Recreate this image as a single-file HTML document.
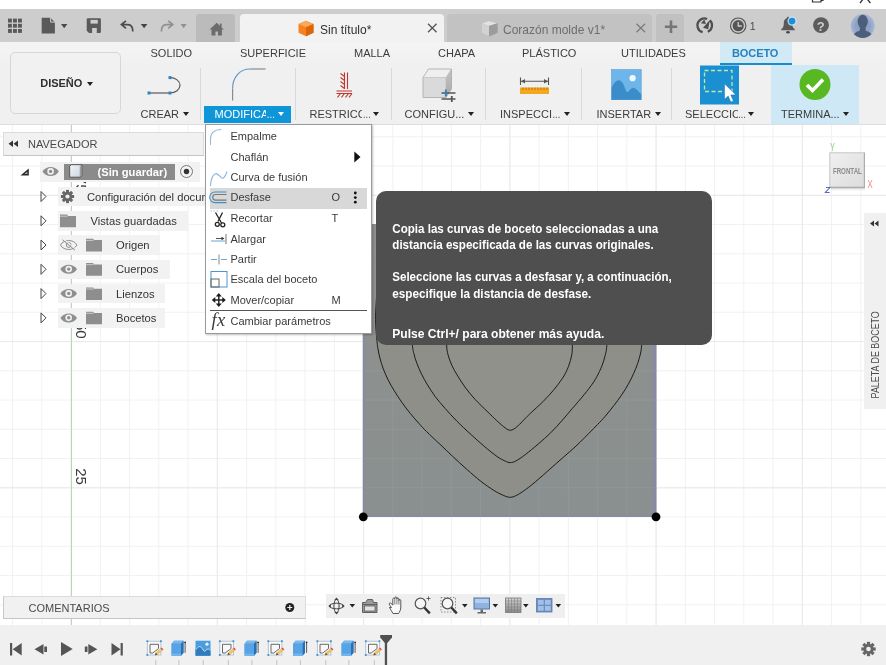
<!DOCTYPE html>
<html>
<head>
<meta charset="utf-8">
<title>Fusion 360</title>
<style>
html,body{margin:0;padding:0;}
body{width:886px;height:665px;overflow:hidden;background:#fff;position:relative;font-family:"Liberation Sans",sans-serif;font-size:11px;color:#3c3c3c;}
.abs{position:absolute;}
.t{position:absolute;white-space:nowrap;line-height:14px;}
#canvas{position:absolute;left:0;top:124px;width:886px;height:501px;background:#fff;overflow:hidden;}
#titlebar{position:absolute;left:0;top:9.300px;width:886px;height:32.700px;background:#cdcdcd;}
#ribbon{position:absolute;left:0;top:41.700px;width:886px;height:83.300px;background:linear-gradient(#f4f4f4,#f0f0f0 30%,#f0f0f0);border-bottom:1px solid #dedede;box-sizing:border-box;}
.sep{position:absolute;top:68px;width:1px;height:52px;background:#d9d9d9;}
.rt{position:absolute;top:46px;line-height:14px;white-space:nowrap;color:#3c3c3c;}
.rl{position:absolute;top:107px;line-height:14px;white-space:nowrap;color:#3c3c3c;}
.dd{position:absolute;width:0;height:0;border-left:3px solid transparent;border-right:3px solid transparent;border-top:4px solid #222;}
</style>
</head>
<body>
<div id="root" style="position:absolute;left:0;top:0;width:886px;height:665px;overflow:hidden;will-change:transform;">

<!-- ============ CANVAS ============ -->
<div id="canvas">
<svg class="abs" style="left:0;top:0" width="886" height="501" viewBox="0 124 886 501">
  <defs>
    <pattern id="gmin" x="70.6" y="487.3" width="29.25" height="29.25" patternUnits="userSpaceOnUse">
      <path d="M0.5 0V29.25M0 0.5H29.25" stroke="#f1f1f1" stroke-width="1" fill="none"/>
    </pattern>
    <pattern id="gmaj" x="70.6" y="487.3" width="146.25" height="146.25" patternUnits="userSpaceOnUse">
      <path d="M0.5 0V146.25M0 0.5H146.25" stroke="#e9e9e9" stroke-width="1" fill="none"/>
    </pattern>
  </defs>
  <rect x="0" y="124" width="886" height="501" fill="url(#gmin)"/>
  <rect x="0" y="124" width="886" height="501" fill="url(#gmaj)"/>
  <!-- green axis -->
  <line x1="71.500" y1="124" x2="71.500" y2="625" stroke="#b6d9ba" stroke-width="1"/>
  <!-- sketch rectangle -->
  <defs>
    <linearGradient id="rg" x1="0" y1="0" x2="0" y2="1">
      <stop offset="0" stop-color="#8f908d"/><stop offset="1" stop-color="#8a9090"/>
    </linearGradient>
  </defs>
  <rect x="363" y="224" width="293.300" height="292.900" fill="url(#rg)"/>
  <defs>
    <linearGradient id="eR" x1="0" y1="0" x2="1" y2="0"><stop offset="0" stop-color="#8686ac" stop-opacity="0"/><stop offset="0.550" stop-color="#8686ac" stop-opacity="0.300"/><stop offset="1" stop-color="#8686ac" stop-opacity="0.950"/></linearGradient>
    <linearGradient id="eL" x1="1" y1="0" x2="0" y2="0"><stop offset="0" stop-color="#8686ac" stop-opacity="0"/><stop offset="1" stop-color="#8686ac" stop-opacity="0.950"/></linearGradient>
    <linearGradient id="eB" x1="0" y1="0" x2="0" y2="1"><stop offset="0" stop-color="#8686ac" stop-opacity="0"/><stop offset="1" stop-color="#8686ac" stop-opacity="0.950"/></linearGradient>
  </defs>
  <rect x="649.300" y="224" width="7" height="292.900" fill="url(#eR)"/>
  <rect x="362.700" y="224" width="3.300" height="292.900" fill="url(#eL)"/>
  <rect x="363" y="513.600" width="293.300" height="3.300" fill="url(#eB)"/>
  <!-- faint grid showing through -->
  <g stroke="#ffffff" stroke-opacity="0.060" stroke-width="1">
    <path d="M392.800 224v293M422.100 224v293M451.300 224v293M480.600 224v293M509.800 224v293M539.100 224v293M568.300 224v293M597.600 224v293M626.800 224v293"/>
    <path d="M363 370.800h293M363 400h293M363 429.300h293M363 458.500h293M363 487.800h293"/>
  </g>
  <!-- hearts -->
  <path id="h1" d="M510.5 272.0C503.0 272.0 497.2 256.0 488.0 250.0C478.8 244.0 466.3 238.0 455.0 236.0C443.7 234.0 430.3 234.7 420.0 238.0C409.7 241.3 399.8 248.3 393.0 256.0C386.2 263.7 381.9 275.0 379.0 284.0C376.1 293.0 376.3 302.7 375.8 310.0C375.3 317.3 375.7 322.9 375.9 328.0C376.1 333.1 376.6 337.0 376.9 340.4C377.2 343.8 377.4 345.6 377.9 348.5C378.4 351.4 379.0 354.6 379.9 358.0C380.8 361.4 381.9 365.3 383.3 368.9C384.7 372.5 386.2 376.1 388.0 379.7C389.8 383.3 391.8 386.8 394.1 390.5C396.4 394.2 398.9 398.1 401.6 402.0C404.3 405.9 407.5 410.0 410.4 413.6C413.3 417.2 416.5 420.7 419.2 423.7C421.9 426.7 423.0 428.1 426.5 431.5C430.0 434.9 435.6 440.2 440.0 444.3C444.4 448.4 448.1 452.1 452.6 456.3C457.1 460.5 462.1 465.2 466.9 469.4C471.6 473.6 476.6 478.0 481.1 481.5C485.6 485.0 490.0 488.0 493.7 490.3C497.4 492.6 500.4 494.1 503.2 495.3C506.0 496.5 507.9 497.4 510.3 497.3C512.7 497.2 514.4 496.5 517.4 494.9C520.4 493.2 524.3 490.6 528.5 487.4C532.7 484.2 538.0 479.6 542.7 475.5C547.4 471.4 552.4 466.8 556.9 462.9C561.4 458.9 565.8 455.2 569.6 451.8C573.5 448.4 576.8 445.4 580.0 442.3C583.2 439.2 586.0 436.2 589.0 433.2C592.0 430.2 595.0 427.2 597.7 424.4C600.4 421.6 602.5 419.5 605.2 416.3C607.9 413.1 611.3 408.9 614.0 405.4C616.7 401.9 619.0 398.8 621.4 395.3C623.8 391.8 626.2 388.0 628.2 384.4C630.2 380.8 632.0 377.1 633.6 373.6C635.2 370.1 636.6 366.7 637.7 363.4C638.8 360.1 639.7 357.0 640.4 354.0C641.1 351.0 641.2 349.5 641.7 345.2C642.2 340.9 643.1 333.9 643.5 328.0C643.9 322.1 644.4 317.3 644.0 310.0C643.6 302.7 643.7 293.0 641.0 284.0C638.3 275.0 634.7 263.7 628.0 256.0C621.3 248.3 611.3 241.3 601.0 238.0C590.7 234.7 577.3 234.0 566.0 236.0C554.7 238.0 542.2 244.0 533.0 250.0C523.8 256.0 518.0 272.0 510.5 272.0z" fill="#8f8f89" stroke="#1c1c1c" stroke-width="1"/>
  <path id="h2" d="M510.5 296.0C503.7 296.0 498.1 281.0 490.0 276.0C481.9 271.0 471.3 266.7 462.0 266.0C452.7 265.3 441.7 267.7 434.0 272.0C426.3 276.3 419.9 284.3 416.0 292.0C412.1 299.7 411.1 309.2 410.5 318.0C409.9 326.8 411.8 338.9 412.4 344.9C413.0 350.8 413.1 350.6 413.9 353.7C414.6 356.8 415.6 360.0 416.9 363.4C418.2 366.8 419.8 370.6 421.6 374.2C423.4 377.8 425.2 381.1 427.5 384.9C429.8 388.6 432.4 392.8 435.3 396.7C438.2 400.6 441.5 404.3 445.1 408.4C448.7 412.5 452.7 416.9 456.8 421.1C460.9 425.3 465.4 429.4 470.0 433.6C474.6 437.8 479.7 442.5 484.2 446.3C488.7 450.1 493.5 454.0 496.9 456.4C500.3 458.8 502.6 459.9 504.8 460.9C507.0 461.9 508.5 462.6 510.3 462.6C512.1 462.6 513.3 462.3 515.8 461.0C518.3 459.7 521.6 457.4 525.3 454.6C529.0 451.8 533.8 447.8 538.0 444.2C542.2 440.6 546.5 436.9 550.6 432.9C554.7 428.9 558.9 424.1 562.5 420.0C566.1 415.9 568.8 412.6 572.4 408.4C576.0 404.2 580.7 398.9 584.1 394.7C587.5 390.5 590.9 386.1 593.0 383.0C595.1 379.9 595.5 379.1 597.0 376.3C598.5 373.5 600.4 369.7 601.8 366.2C603.2 362.7 604.4 358.8 605.2 355.3C606.1 351.8 606.2 351.4 606.9 345.2C607.6 339.0 609.8 326.9 609.5 318.0C609.2 309.1 608.8 299.7 605.0 292.0C601.2 284.3 594.7 276.3 587.0 272.0C579.3 267.7 568.3 265.3 559.0 266.0C549.7 266.7 539.1 271.0 531.0 276.0C522.9 281.0 517.3 296.0 510.5 296.0z" fill="#8f8f89" stroke="#1c1c1c" stroke-width="1"/>
  <path id="h3" d="M510.5 318.0C505.0 318.0 500.1 305.3 494.0 302.0C487.9 298.7 480.5 297.0 474.0 298.0C467.5 299.0 459.6 303.3 455.0 308.0C450.4 312.7 447.9 319.9 446.5 326.0C445.1 332.1 446.4 340.1 446.6 344.9C446.9 349.7 447.1 351.3 448.0 354.7C448.9 358.1 450.3 361.8 451.9 365.4C453.5 369.0 455.5 372.4 457.8 376.1C460.1 379.9 462.7 384.0 465.6 387.9C468.5 391.8 471.7 395.7 475.3 399.6C478.9 403.5 483.9 408.2 487.1 411.3C490.3 414.4 491.8 416.0 494.5 418.5C497.2 421.0 500.6 424.3 503.2 426.3C505.8 428.3 507.9 430.3 510.3 430.3C512.7 430.3 514.8 428.4 517.4 426.3C520.0 424.2 523.9 419.7 526.1 417.5C528.3 415.3 527.6 416.0 530.4 413.3C533.2 410.6 539.2 405.4 543.1 401.5C547.0 397.6 550.5 393.7 553.8 389.8C557.0 385.9 560.1 382.0 562.6 378.1C565.1 374.2 567.0 370.3 568.5 366.4C570.0 362.5 571.1 358.3 571.8 354.7C572.4 351.1 572.2 349.7 572.4 344.9C572.6 340.1 574.1 332.1 573.0 326.0C571.9 319.9 570.3 312.7 566.0 308.0C561.7 303.3 553.5 299.0 547.0 298.0C540.5 297.0 533.1 298.7 527.0 302.0C520.9 305.3 516.0 318.0 510.5 318.0z" fill="#90918a" stroke="#1c1c1c" stroke-width="1"/>
  <circle cx="363.300" cy="516.800" r="4.400" fill="#000"/>
  <circle cx="656" cy="516.800" r="4.400" fill="#000"/>
  <!-- axis labels (rotated) -->
  <g font-family="Liberation Sans, sans-serif" font-size="15" fill="#3a3a3a">
    <text transform="translate(75.500,175.800) rotate(90)">75</text>
    <text transform="translate(75.500,322) rotate(90)">50</text>
    <text transform="translate(75.500,468.200) rotate(90)">25</text>
  </g>
</svg>
</div>

<!-- ============ BROWSER ============ -->
<style>
.row{position:absolute;height:19.500px;background:#f2f2f2;}
.rtx{position:absolute;white-space:nowrap;line-height:14px;font-size:11.200px;color:#333;}
</style>
<div class="abs" style="left:2.500px;top:131.500px;width:201px;height:24px;box-sizing:border-box;background:#f1f1f1;border:1px solid #dcdcdc;border-bottom-color:#c4c4c4;"></div>
<div class="t" style="left:28px;top:137px;color:#4a4a4a;">NAVEGADOR</div>
<!-- rows -->
<div class="row" style="left:39.500px;top:162px;width:160.500px;"></div>
<div class="abs" style="left:64.200px;top:164.200px;width:111px;height:15.500px;background:#8b8b8b;"></div>
<div class="row" style="left:57.500px;top:186.800px;width:150px;"></div>
<div class="row" style="left:57.500px;top:211px;width:130px;"></div>
<div class="row" style="left:57.500px;top:235.200px;width:102.500px;"></div>
<div class="row" style="left:57.500px;top:259.500px;width:112px;"></div>
<div class="row" style="left:57.500px;top:283.800px;width:107.500px;"></div>
<div class="row" style="left:57.500px;top:308.100px;width:107.500px;"></div>
<div class="rtx" style="left:97.500px;top:165px;color:#fff;font-weight:bold;font-size:11.200px;">(Sin guardar)</div>
<div class="rtx" style="left:87px;top:189.500px;">Configuración del documento</div>
<div class="rtx" style="left:90.500px;top:213.800px;">Vistas guardadas</div>
<div class="rtx" style="left:116px;top:238px;">Origen</div>
<div class="rtx" style="left:116px;top:262.300px;">Cuerpos</div>
<div class="rtx" style="left:116px;top:286.600px;">Lienzos</div>
<div class="rtx" style="left:116px;top:310.900px;">Bocetos</div>
<svg class="abs" style="left:0;top:124px" width="210" height="220" viewBox="0 124 210 220">
  <!-- collapse arrows -->
  <path d="M13 140.500l-4.500 3.300l4.500 3.300zM18 140.500l-4.500 3.300l4.500 3.300z" fill="#333"/>
  <!-- root expand -->
  <path d="M28.800 168.500v7h-8.300z" fill="#2a2a2a"/><path d="M27.300 171.800v2.300h-2.800z" fill="#bbb"/>
  <!-- root eye -->
  <g fill="none">
    <path d="M42.500 171.600c3.600-6 12.700-6 16.300 0c-3.600 6-12.700 6-16.300 0z" fill="#8e8e8e"/>
    <circle cx="50.600" cy="171.400" r="3.300" fill="#f2f2f2"/>
    <circle cx="50.600" cy="171.400" r="1.700" fill="#8e8e8e"/>
  </g>
  <!-- root doc icon -->
  <defs><linearGradient id="dg" x1="0" y1="0" x2="1" y2="1"><stop offset="0" stop-color="#f4f7fa"/><stop offset="1" stop-color="#c9d3de"/></linearGradient></defs>
  <path d="M69.700 166.300l1.600-1.600h10.600v10.800l-1.600 1.700h-10.600z" fill="url(#dg)" stroke="#4f4f4f" stroke-width="0.900" stroke-linejoin="round"/>
  <path d="M80.300 166.300v10.900M80.300 166.300l1.600-1.600" fill="none" stroke="#6a6a6a" stroke-width="0.700"/>
  <!-- radio -->
  <circle cx="186.500" cy="171.500" r="6" fill="#f4f4f4" stroke="#777" stroke-width="1"/>
  <circle cx="186.500" cy="171.500" r="2.700" fill="#333"/>
  <!-- expand triangles -->
  <g fill="none" stroke="#444" stroke-width="1">
    <path d="M41 191.500v10l5-5z"/>
    <path d="M41 215.800v10l5-5z"/>
    <path d="M41 240v10l5-5z"/>
    <path d="M41 264.300v10l5-5z"/>
    <path d="M41 288.600v10l5-5z"/>
    <path d="M41 312.900v10l5-5z"/>
  </g>
  <!-- gear -->
  <g transform="translate(67.500,196.500)" fill="#666">
    <circle r="4.600"/>
    <g id="teeth"><rect x="-1.500" y="-6.600" width="3" height="13.200"/><rect x="-6.600" y="-1.500" width="13.200" height="3"/></g>
    <g transform="rotate(45)"><rect x="-1.500" y="-6.600" width="3" height="13.200"/><rect x="-6.600" y="-1.500" width="13.200" height="3"/></g>
    <circle r="2.100" fill="#efefef"/>
  </g>
  <!-- folders -->
  <g fill="#8e8e8e">
    <path d="M60 214.6h7l1.200 1.300h7.800v11.300h-16z"/>
    <path d="M86 238.8h7l1.200 1.300h7.800v11.300h-16z"/>
    <path d="M86 263.1h7l1.200 1.300h7.800v11.300h-16z"/>
    <path d="M86 287.4h7l1.200 1.300h7.800v11.300h-16z"/>
    <path d="M86 311.7h7l1.200 1.300h7.800v11.300h-16z"/>
  </g>
  <g stroke="#f2f2f2" stroke-width="0.600"><path d="M60 216.200h7.600M86 240.400h7.600M86 264.700h7.600M86 289h7.600M86 313.300h7.600"/></g>
  <!-- eyes -->
  <g>
    <path d="M60.400 245c3.600-6 13-6 16.600 0c-3.600 6-13 6-16.600 0z" fill="none" stroke="#8e8e8e" stroke-width="1"/>
    <circle cx="68.700" cy="245" r="2.400" fill="none" stroke="#8e8e8e" stroke-width="1"/>
    <path d="M62.500 239.800l12.500 10.400" stroke="#8e8e8e" stroke-width="1"/>
    <path d="M64 239.200l12.500 10.400" stroke="#f2f2f2" stroke-width="0.900"/>
  </g>
  <g>
    <path d="M60.400 269.3c3.600-6 13-6 16.600 0c-3.600 6-13 6-16.600 0z" fill="#8e8e8e"/>
    <circle cx="68.700" cy="269.1" r="3.300" fill="#f2f2f2"/><circle cx="68.700" cy="269.1" r="1.700" fill="#8e8e8e"/>
    <path d="M60.400 293.6c3.600-6 13-6 16.600 0c-3.600 6-13 6-16.600 0z" fill="#8e8e8e"/>
    <circle cx="68.700" cy="293.4" r="3.300" fill="#f2f2f2"/><circle cx="68.700" cy="293.4" r="1.700" fill="#8e8e8e"/>
    <path d="M60.400 317.9c3.600-6 13-6 16.600 0c-3.600 6-13 6-16.600 0z" fill="#8e8e8e"/>
    <circle cx="68.700" cy="317.7" r="3.300" fill="#f2f2f2"/><circle cx="68.700" cy="317.7" r="1.700" fill="#8e8e8e"/>
  </g>
</svg>

<!-- ============ TITLE BAR ============ -->
<div id="titlebar"></div>
<!-- window controls (cropped) -->
<svg class="abs" style="left:800px;top:0" width="86" height="9" viewBox="800 0 86 9">
  <path d="M812.500 -3v5h8.500v-5M821 0.500h2v-4" fill="none" stroke="#333" stroke-width="1.200"/>
  <path d="M865.200 -3.500l-5.200 6.500M865.200 -3.500l5.200 6.500" fill="none" stroke="#333" stroke-width="1.300"/>
</svg>
<!-- home button -->
<div class="abs" style="left:195.500px;top:13.500px;width:39px;height:28px;background:#bbbbbb;border-radius:3px 3px 0 0;"></div>
<!-- active tab -->
<div class="abs" style="left:239.500px;top:13.500px;width:204px;height:28.500px;background:#f2f2f2;border-radius:4px 4px 0 0;"></div>
<!-- second tab -->
<div class="abs" style="left:447px;top:13.500px;width:204.500px;height:28.500px;background:#c2c2c2;border-radius:4px 4px 0 0;"></div>
<!-- plus button -->
<div class="abs" style="left:656px;top:13.500px;width:28px;height:28px;background:#c1c1c1;border-radius:3px 3px 0 0;"></div>
<svg class="abs" style="left:0;top:9px" width="886" height="32" viewBox="0 9 886 32">
  <!-- app grid -->
  <g fill="#5a5a5a">
    <rect x="8" y="18.600" width="3.900" height="3.900"/><rect x="13" y="18.600" width="3.900" height="3.900"/><rect x="18" y="18.600" width="3.900" height="3.900"/>
    <rect x="8" y="23.800" width="3.900" height="3.900"/><rect x="13" y="23.800" width="3.900" height="3.900"/><rect x="18" y="23.800" width="3.900" height="3.900"/>
    <rect x="8" y="29" width="3.900" height="3.900"/><rect x="13" y="29" width="3.900" height="3.900"/><rect x="18" y="29" width="3.900" height="3.900"/>
  </g>
  <!-- file -->
  <path d="M41.700 17.800h8.700l4.500 4.500v11.200h-13.200z" fill="#5a5a5a"/>
  <path d="M50.600 17.800v4.300h4.300" fill="none" stroke="#cdcdcd" stroke-width="1"/>
  <path d="M61 24.100h6.400l-3.200 4.100z" fill="#4a4a4a"/>
  <!-- save -->
  <path d="M88 18.200h11.700q1.200 0 1.200 1.200v12.400q0 1.200-1.200 1.200h-10.700l-2.300-2.300v-11.300q0-1.200 1.300-1.200z" fill="#5a5a5a"/>
  <rect x="90.500" y="19.900" width="7.300" height="3.700" fill="#cdcdcd"/>
  <rect x="92.100" y="28" width="4.700" height="5.200" fill="#cdcdcd"/>
  <!-- undo -->
  <path d="M126 20.800l-4.600 3.800 4.600 3.800M122 24.600h6q4.800 0 4.800 6.900" fill="none" stroke="#4d4d4d" stroke-width="1.700" stroke-linejoin="miter"/>
  <path d="M140.800 24.100h6.600l-3.300 4.100z" fill="#444"/>
  <!-- redo -->
  <path d="M168.200 20.800l4.600 3.800-4.600 3.800M172.200 24.600h-6q-4.800 0-4.800 6.900" fill="none" stroke="#919191" stroke-width="1.700" stroke-linejoin="miter"/>
  <path d="M180.600 24.100h6l-3 4.100z" fill="#919191"/>
  <!-- home icon -->
  <path d="M216.700 22.800l-7.200 6.600h2v6.200h3.900v-4.200h2.600v4.200h3.900v-6.200h2z" fill="#6c6c6c"/>
  <rect x="219.900" y="23.600" width="1.700" height="3.400" fill="#6c6c6c"/>
  <!-- orange cube -->
  <g transform="translate(0,2.200)">
    <path d="M306 18.5l7.5 3.2v8.8l-7.5 3.5l-7.5-3.5v-8.8z" fill="#f58220"/>
    <path d="M306 18.5l7.5 3.2l-7.5 3.4l-7.5-3.4z" fill="#fba85a"/>
    <path d="M306 25.1v8.9l7.5-3.5v-8.8z" fill="#d9640a"/>
  </g>
  <!-- gray cube -->
  <g transform="translate(0,2.300)">
    <path d="M489 18.8l8.5 2.2v9.5l-8.5 3.8l-7-3.6v-9.6z" fill="#a9a9a9"/>
    <path d="M482 21.1l7 2.6v10.6l-7-3.6z" fill="#d2d2d2"/>
    <path d="M482 21.1l7-2.3l8.5 2.2l-8.5 2.7z" fill="#e2e2e2"/>
    <path d="M489 23.7v10.6l8.5-3.8v-9.5z" fill="#9c9c9c"/>
  </g>
  <!-- tab close X -->
  <path d="M428 23.700l8.600 8.600M436.600 23.700l-8.600 8.600" stroke="#555" stroke-width="1.3" fill="none"/>
  <path d="M636.500 23.700l8.600 8.600M645.100 23.700l-8.600 8.600" stroke="#7d7d7d" stroke-width="1.3" fill="none"/>
  <!-- plus -->
  <path d="M671 20.500v12.500M664.800 26.800h12.400" stroke="#767676" stroke-width="2.600" fill="none"/>
  <!-- job status -->
  <path d="M709.800 20.300a7 7 0 0 1-2 11.500M702.600 32.200a7 7 0 0 1-3-11.800a7 7 0 0 1 7.500-1.400" fill="none" stroke="#4f4f4f" stroke-width="2.300"/>
  <path d="M703 27.800l6.800-7.800l-1.600 9.200z" fill="#4f4f4f"/>
  <path d="M700.800 23.200l3.600-3.600l1.500 4.500z" fill="#4f4f4f"/>
  <!-- clock -->
  <circle cx="738.200" cy="25.700" r="7.700" fill="none" stroke="#555" stroke-width="1.100"/>
  <circle cx="738.200" cy="25.700" r="5.600" fill="#555"/>
  <path d="M738.200 22v4h3.600" fill="none" stroke="#cdcdcd" stroke-width="1.300"/>
  <!-- bell -->
  <rect x="787" y="16.700" width="2" height="2.500" rx="0.800" fill="#595959"/>
  <path d="M788 18c-3 0-4.200 2.600-4.200 5.400c0 3-0.900 4.600-2.500 5.700v1.200h13.400v-1.200c-1.600-1.100-2.500-2.700-2.500-5.700c0-2.800-1.200-5.400-4.200-5.400z" fill="#595959"/>
  <ellipse cx="788" cy="32.200" rx="1.900" ry="1.200" fill="#4a4a4a"/>
  <circle cx="792.100" cy="21.100" r="4.700" fill="#c4e6f8" opacity="0.850"/>
  <circle cx="792.100" cy="21.100" r="3.300" fill="#1d8fd9"/>
  <!-- help -->
  <circle cx="821" cy="25.200" r="7.900" fill="#5c5c5c"/>
  <!-- avatar -->
  <clipPath id="avc"><circle cx="862.700" cy="26" r="11.900"/></clipPath>
  <radialGradient id="avg" cx="0.5" cy="0.5" r="0.5"><stop offset="0.6" stop-color="#8fa2c6"/><stop offset="1" stop-color="#a7b6d3"/></radialGradient>
  <circle cx="862.700" cy="26" r="11.900" fill="url(#avg)"/>
  <g clip-path="url(#avc)" fill="#4d5d7c">
    <ellipse cx="862.700" cy="21.400" rx="5.100" ry="6.700"/>
    <rect x="859.800" y="25" width="5.800" height="7"/>
    <path d="M852.500 40c0-6 3-8.300 7.300-9.300h5.800c4.300 1 7.300 3.300 7.300 9.300z"/>
  </g>
</svg>
<div class="t" style="left:320px;top:22.500px;font-size:12px;color:#2f2f2f;">Sin título*</div>
<div class="t" style="left:503px;top:22.500px;font-size:12px;color:#6e6e6e;">Corazón molde v1*</div>
<div class="t" style="left:749.800px;top:19px;font-size:10.500px;color:#4a4a4a;">1</div>
<div class="t" style="left:816.8px;top:18.5px;font-size:13px;font-weight:bold;color:#cdcdcd;line-height:15px;">?</div>

<!-- ============ RIBBON ============ -->
<div id="ribbon"></div>
<!-- BOCETO tab highlight + TERMINA highlight -->
<div class="abs" style="left:719.500px;top:41.500px;width:72px;height:22px;background:#d2e9f6;"></div>
<div class="abs" style="left:719.500px;top:62.500px;width:72px;height:2.500px;background:#1a8bcb;"></div>
<div class="abs" style="left:770.500px;top:65px;width:88.500px;height:59px;background:#cfe8f6;"></div>
<!-- ribbon tab labels -->
<div class="rt" style="left:150.500px;">SOLIDO</div>
<div class="rt" style="left:240px;">SUPERFICIE</div>
<div class="rt" style="left:354px;">MALLA</div>
<div class="rt" style="left:438px;">CHAPA</div>
<div class="rt" style="left:522px;">PLÁSTICO</div>
<div class="rt" style="left:621px;">UTILIDADES</div>
<div class="rt" style="left:732px;color:#2582bd;font-weight:bold;letter-spacing:-0.100px;">BOCETO</div>
<!-- DISEÑO button -->
<div class="abs" style="left:10.400px;top:52.100px;width:111px;height:61.500px;box-sizing:border-box;border:1.500px solid #d7d7d7;border-radius:5px;background:#f1f1f1;"></div>
<div class="t" style="left:40.200px;top:75.500px;font-weight:bold;color:#2f2f2f;">DISEÑO</div>
<div class="dd" style="left:87.300px;top:81.700px;"></div>
<!-- separators -->
<div class="sep" style="left:200px;"></div>
<div class="sep" style="left:295px;"></div>
<div class="sep" style="left:391px;"></div>
<div class="sep" style="left:485px;"></div>
<div class="sep" style="left:581px;"></div>
<div class="sep" style="left:671px;"></div>
<!-- MODIFICA button -->
<div class="abs" style="left:204.300px;top:105.500px;width:87px;height:17px;background:#0f96d8;"></div>
<!-- group labels -->
<div class="rl" style="left:140.500px;">CREAR</div><div class="dd" style="left:182.500px;top:112px;"></div>
<div class="rl" style="left:214.500px;color:#fff;width:51.500px;overflow:hidden;">MODIFICA</div><div class="rl" style="left:266.500px;color:#d8eefa;letter-spacing:-0.300px;">...</div><div class="dd" style="left:277.500px;top:112px;border-top-color:#fff;"></div>
<div class="rl" style="left:309.500px;width:52.800px;overflow:hidden;">RESTRICC</div><div class="rl" style="left:362.800px;color:#666;letter-spacing:-0.500px;">...</div><div class="dd" style="left:372.500px;top:112px;"></div>
<div class="rl" style="left:404.500px;">CONFIGU...</div><div class="dd" style="left:468px;top:112px;"></div>
<div class="rl" style="left:500px;width:52px;overflow:hidden;">INSPECCI</div><div class="rl" style="left:552.300px;color:#666;letter-spacing:-0.500px;">...</div><div class="dd" style="left:563.500px;top:112px;"></div>
<div class="rl" style="left:596.500px;">INSERTAR</div><div class="dd" style="left:654.500px;top:112px;"></div>
<div class="rl" style="left:685px;width:52.500px;overflow:hidden;">SELECCIO</div><div class="rl" style="left:738px;color:#666;letter-spacing:-0.500px;">...</div><div class="dd" style="left:748px;top:112px;"></div>
<div class="rl" style="left:781px;">TERMINA...</div><div class="dd" style="left:843px;top:112px;"></div>
<!-- ribbon icons -->
<svg class="abs" style="left:0;top:41px" width="886" height="84" viewBox="0 41 886 84">
  <!-- CREAR: line + arc -->
  <path d="M149 93h21" stroke="#5a5a5a" stroke-width="1.200" fill="none"/>
  <path d="M170 93a10 7.700 0 0 0 0-15.400" stroke="#5a5a5a" stroke-width="1.200" fill="none"/>
  <rect x="147.500" y="91.500" width="3" height="3" fill="#2f86c6"/>
  <rect x="168.500" y="91.500" width="3" height="3" fill="#2f86c6"/>
  <rect x="168.500" y="76.100" width="3" height="3" fill="#2f86c6"/>
  <!-- MODIFICAR: fillet -->
  <path d="M232.600 100.500v-12" stroke="#8a8a8a" stroke-width="1.200" fill="none"/>
  <path d="M232.600 88.500c0-11 7-19.500 17.400-19.500" stroke="#5f97c8" stroke-width="1.200" fill="none"/>
  <path d="M250 69h15.500" stroke="#8a8a8a" stroke-width="1.200" fill="none"/>
  <!-- RESTRICCIONES -->
  <g stroke="#c2342c" stroke-width="1.100" fill="none">
    <path d="M344.500 72.500v16.500M347.500 72.500v16.500"/>
    <path d="M344.500 76.500l-4-3M344.500 80.500l-4-3M344.500 84.500l-4-3M344.500 88.500l-4-3"/>
    <path d="M336.500 91h15.500M336.500 93.500h15.500"/>
    <path d="M340.500 93.500l-3 3.800M344.500 93.500l-3 3.800M348.500 93.500l-3 3.800M352 93.500l-3 3.800"/>
  </g>
  <!-- CONFIGURAR: box + sliders -->
  <g>
    <defs><linearGradient id="cb" x1="0" y1="0" x2="0" y2="1"><stop offset="0" stop-color="#c4c4c4"/><stop offset="1" stop-color="#a9a9a9"/></linearGradient></defs>
    <path d="M423 77.500l5.500-8.500h23l-5.500 8.500z" fill="#efefef"/>
    <path d="M446 77.500l5.500-8.500v20l-5.500 8.500z" fill="url(#cb)"/>
    <rect x="423" y="77.500" width="23" height="20" fill="#dadada"/>
    <path d="M423 77.500l5.500-8.500h23v20l-5.500 8.500h-23z" fill="none" stroke="#a6a6a6" stroke-width="0.800" stroke-linejoin="round"/>
    <path d="M423 77.500h23v20M446 77.500l5.500-8.500" fill="none" stroke="#b8b8b8" stroke-width="0.600"/>
    <path d="M441.500 93h14M441.500 99h14" stroke="#555" stroke-width="1.400"/>
    <path d="M445.800 89.500v7" stroke="#2a7fc4" stroke-width="1.800"/>
    <path d="M451.800 96v6" stroke="#555" stroke-width="1.800"/>
  </g>
  <!-- INSPECCIONAR -->
  <g>
    <path d="M520.500 77.500v7.500M548.500 77.500v7.500M521 81.300h27" stroke="#555" stroke-width="1.100" fill="none"/>
    <path d="M521 81.300l4-2.300v4.600zM548 81.300l-4-2.300v4.600z" fill="#555"/>
    <rect x="520" y="87.500" width="29" height="6.500" fill="#f3a820"/>
    <path d="M523 87.500v2.500M526 87.500v2.500M529 87.500v2.500M532 87.500v2.500M535 87.500v2.500M538 87.500v2.500M541 87.500v2.500M544 87.500v2.500M547 87.500v2.500" stroke="#a86a00" stroke-width="0.800"/>
  </g>
  <!-- INSERTAR image -->
  <g>
    <rect x="611.600" y="69.700" width="29.600" height="30" fill="#6eb5e9" stroke="#4d9ad6" stroke-width="0.600"/>
    <path d="M611.600 99.700v-12c2-4.500 4.500-7.500 7.200-7.500c3.200 0 4.800 4 6.200 8c0.800 2.300 1.600 3.800 2.600 3.800c1.600 0 2.900-4.200 5.600-4.200c2.500 0 4.500 3 8 6.500v5.400z" fill="#3b8dca"/>
    <circle cx="632.600" cy="78.200" r="3.100" fill="#f2f8fd"/>
  </g>
  <!-- SELECCIONAR -->
  <g>
    <rect x="700" y="65.500" width="39" height="39" fill="#1a8fd2"/>
    <rect x="704.500" y="70.500" width="27.500" height="21" fill="none" stroke="#bfe9a6" stroke-width="1.300" stroke-dasharray="4 2.500"/>
    <path d="M724.500 83.800v15.500l3.700-3.200l2.600 5.900l2.600-1.100l-2.600-5.800l5-0.300z" fill="#fff" stroke="#1a6fa8" stroke-width="0.500"/>
  </g>
  <!-- TERMINAR -->
  <circle cx="815" cy="84.500" r="15.500" fill="#58b822"/>
  <path d="M807 85l5.500 5.500l10.500-11" fill="none" stroke="#fff" stroke-width="3.600" stroke-linejoin="miter"/>
</svg>

<!-- ============ DROPDOWN MENU ============ -->
<style>
.mi{position:absolute;left:230.500px;white-space:nowrap;line-height:14px;font-size:11px;color:#3a3a3a;}
.mk{position:absolute;white-space:nowrap;line-height:14px;font-size:11px;color:#3a3a3a;}
</style>
<div class="abs" id="menu" style="left:204.500px;top:124px;width:167.500px;height:210px;box-sizing:border-box;background:#fff;border:1px solid #9a9a9a;box-shadow:1px 1px 2px rgba(0,0,0,0.25);"></div>
<div class="abs" style="left:210px;top:187.500px;width:156.500px;height:21px;background:#d8d8d8;"></div>
<div class="mi" style="top:129.3px;">Empalme</div>
<div class="mi" style="top:149.5px;">Chaflán</div>
<div class="mi" style="top:169.7px;">Curva de fusión</div>
<div class="mi" style="top:190px;">Desfase</div>
<div class="mi" style="top:211px;">Recortar</div>
<div class="mi" style="top:231.7px;">Alargar</div>
<div class="mi" style="top:251.8px;">Partir</div>
<div class="mi" style="top:272.1px;">Escala del boceto</div>
<div class="mi" style="top:292.5px;">Mover/copiar</div>
<div class="mi" style="top:313.5px;">Cambiar parámetros</div>
<div class="mk" style="left:331.500px;top:190px;">O</div>
<div class="mk" style="left:331.500px;top:211px;">T</div>
<div class="mk" style="left:331.500px;top:292.5px;">M</div>
<div class="abs" style="left:210px;top:310px;width:157px;height:1px;background:#555;"></div>
<svg class="abs" style="left:204px;top:124px" width="170" height="212" viewBox="204 124 170 212">
  <!-- empalme -->
  <path d="M210.500 145v-5" fill="none" stroke="#a8b4be" stroke-width="1.100"/><path d="M210.500 140v-1c0-6 4-9.500 11-9.500" fill="none" stroke="#8fbde2" stroke-width="1.100"/>
  <!-- submenu arrow -->
  <path d="M354.300 151.500v11l6.200-5.500z" fill="#111"/>
  <!-- curva de fusion -->
  <path d="M210.500 186c0.500-9 4-14.500 7.500-11.500s5 8 9-3" fill="none" stroke="#86b6de" stroke-width="1.100"/>
  <!-- desfase -->
  <path d="M226.500 192h-11.500a5.300 5.300 0 0 0 0 10.600h11.500" fill="none" stroke="#3f8fcb" stroke-width="1.100"/>
  <path d="M226.500 194.500h-11a2.800 2.800 0 0 0 0 5.600h11" fill="none" stroke="#777" stroke-width="1.100"/>
  <!-- three dots -->
  <circle cx="355.300" cy="193" r="1.400" fill="#111"/><circle cx="355.300" cy="197.600" r="1.400" fill="#111"/><circle cx="355.300" cy="202.200" r="1.400" fill="#111"/>
  <!-- recortar scissors -->
  <g fill="none" stroke="#222" stroke-width="1.300">
    <path d="M215.500 212.500l6 10.500M222.500 212.500l-4.500 9"/>
    <circle cx="217.300" cy="224.300" r="2"/><circle cx="222.800" cy="224.800" r="2"/>
  </g>
  <path d="M210.500 211h8" stroke="#9ec4e4" stroke-width="1" stroke-dasharray="1.500 1.500"/>
  <!-- alargar -->
  <path d="M211 241h14" stroke="#6aa6d6" stroke-width="1"/>
  <path d="M216 238.500h6.500" stroke="#555" stroke-width="1"/>
  <path d="M224.500 238.500l-3-1.800v3.600z" fill="#333"/>
  <path d="M226 234v10" stroke="#777" stroke-width="1"/>
  <!-- partir -->
  <path d="M211 259.500h6M221 259.500h6" stroke="#6aa6d6" stroke-width="1"/>
  <path d="M219 254.500v10" stroke="#8a8a8a" stroke-width="1"/>
  <!-- escala -->
  <rect x="211" y="271.500" width="16" height="15.500" fill="none" stroke="#4c95cf" stroke-width="1"/>
  <rect x="211" y="279" width="8" height="8" fill="none" stroke="#666" stroke-width="1"/>
  <!-- mover -->
  <g fill="#1c1c1c">
    <path d="M218.800 293l3 3.500h-6zM218.800 307l3-3.500h-6zM211.800 300l3.500-3v6zM225.800 300l-3.500-3v6z"/>
    <rect x="218.100" y="295" width="1.400" height="10"/><rect x="213.800" y="299.300" width="10" height="1.400"/>
  </g>
</svg>
<div class="abs" style="left:211.500px;top:310px;font-family:'Liberation Serif',serif;font-style:italic;font-size:18.500px;line-height:20px;color:#3a3a3a;letter-spacing:0.300px;">fx</div>

<!-- ============ TOOLTIP ============ -->
<div class="abs" style="left:376px;top:191px;width:336px;height:154px;background:#4f4f4f;border-radius:10px;"></div>
<svg class="abs" style="left:376px;top:191px" width="336" height="154" viewBox="376 191 336 154">
  <g font-family="Liberation Sans, sans-serif" font-weight="bold" font-size="12.300" fill="#fff" lengthAdjust="spacingAndGlyphs">
    <text x="392.300" y="233.400" textLength="266" lengthAdjust="spacingAndGlyphs">Copia las curvas de boceto seleccionadas a una</text>
    <text x="392.300" y="249.300" textLength="261.500" lengthAdjust="spacingAndGlyphs">distancia especificada de las curvas originales.</text>
    <text x="392.300" y="281.300" textLength="279.500" lengthAdjust="spacingAndGlyphs">Seleccione las curvas a desfasar y, a continuación,</text>
    <text x="392.300" y="297.500" textLength="199" lengthAdjust="spacingAndGlyphs">especifique la distancia de desfase.</text>
    <text x="392.300" y="338.200" textLength="212" lengthAdjust="spacingAndGlyphs">Pulse Ctrl+/ para obtener más ayuda.</text>
  </g>
</svg>

<!-- ============ VIEWCUBE ============ -->
<svg class="abs" style="left:815px;top:138px" width="71" height="62" viewBox="815 138 71 62">
  <defs>
    <linearGradient id="vc" x1="0" y1="0" x2="1" y2="1"><stop offset="0" stop-color="#f0f0f0"/><stop offset="1" stop-color="#dcdcdc"/></linearGradient>
    <linearGradient id="vs" x1="0" y1="0" x2="0" y2="1"><stop offset="0" stop-color="#bdbdbd"/><stop offset="1" stop-color="#ffffff" stop-opacity="0"/></linearGradient>
  </defs>
  <rect x="831" y="187.500" width="34" height="4" fill="url(#vs)"/>
  <rect x="829.800" y="152.800" width="34.600" height="34.600" fill="url(#vc)" stroke="#c6c6c6" stroke-width="1"/>
  <path d="M829.800 187.400h34.600v-34.600" fill="none" stroke="#ababab" stroke-width="1.100"/>
  <text x="832.900" y="173.800" font-family="Liberation Sans, sans-serif" font-size="8.700" font-weight="bold" fill="#8c8c8c" textLength="29" lengthAdjust="spacingAndGlyphs">FRONTAL</text>
  <text x="830" y="151.300" font-family="Liberation Sans, sans-serif" font-size="11" fill="#86d48a" textLength="5" lengthAdjust="spacingAndGlyphs">Y</text>
  <text x="867.400" y="188.400" font-family="Liberation Sans, sans-serif" font-size="10.500" fill="#ee8585" textLength="5.200" lengthAdjust="spacingAndGlyphs">X</text>
  <text x="824.800" y="192.900" font-family="Liberation Sans, sans-serif" font-size="9.800" font-style="italic" font-weight="bold" fill="#5a66c8" textLength="5.600" lengthAdjust="spacingAndGlyphs">Z</text>
</svg>

<!-- ============ PALETTE TAB ============ -->
<div class="abs" style="left:864px;top:212.800px;width:22px;height:196.500px;background:#f0f0f0;"></div>
<svg class="abs" style="left:864px;top:212px" width="22" height="200" viewBox="864 212 22 200">
  <path d="M874 220.500l-4 3l4 3zM878.500 220.500l-4 3l4 3z" fill="#333"/>
  <text transform="translate(879.400,398.400) rotate(-90)" font-family="Liberation Sans, sans-serif" font-size="10.800" fill="#4a4a4a" textLength="87.200" lengthAdjust="spacingAndGlyphs">PALETA DE BOCETO</text>
</svg>

<!-- ============ COMMENTS BAR ============ -->
<div class="abs" style="left:2.500px;top:595.500px;width:303px;height:23.500px;box-sizing:border-box;background:#f1f1f1;border:1px solid #dcdcdc;border-bottom-color:#c4c4c4;border-left-color:#c8c8c8;"></div>
<div class="t" style="left:28.500px;top:600.500px;color:#4a4a4a;">COMENTARIOS</div>
<svg class="abs" style="left:280px;top:598px" width="20" height="20" viewBox="280 598 20 20">
  <circle cx="289.800" cy="607.500" r="4.500" fill="#222"/>
  <path d="M289.800 605v5M287.300 607.500h5" stroke="#f1f1f1" stroke-width="1.200"/>
</svg>

<!-- ============ NAV TOOLBAR ============ -->
<div class="abs" style="left:325.500px;top:593.500px;width:239.500px;height:24.500px;background:#efefef;"></div>
<svg class="abs" style="left:325px;top:593px" width="242" height="26" viewBox="325 593 242 26">
  <!-- orbit -->
  <g fill="none" stroke="#444" stroke-width="1">
    <ellipse cx="336.500" cy="606" rx="6.800" ry="2.800"/>
    <ellipse cx="336.500" cy="606" rx="2.600" ry="6.800"/>
  </g>
  <path d="M336.500 597.500l2.200 2.500h-4.400zM336.500 614.500l2.200-2.500h-4.400zM328.300 606l2.500-2.200v4.400zM344.700 606l-2.500-2.200v4.400z" fill="#444"/>
  <path d="M349.500 604h5.600l-2.800 3.600z" fill="#222"/>
  <!-- look at -->
  <path d="M362.500 602.500h3l2-3h5l1 3h3.500v10h-14.500z" fill="#9a9a9a" stroke="#555" stroke-width="0.900"/>
  <rect x="364.500" y="606" width="10.500" height="5" fill="#e4e4e4" stroke="#555" stroke-width="0.700"/>
  <path d="M363 604.500h14" stroke="#555" stroke-width="0.800"/>
  <!-- hand -->
  <path d="M391.500 607.500c-1.500-2-3-3.500-2-4.300s2 0.300 3.300 2v-6c0-1.500 2-1.500 2 0v-1.200c0-1.500 2.100-1.500 2.100 0v1c0-1.400 2-1.400 2 0v1.500c0-1.300 1.900-1.300 1.900 0v6.500c0 3-1.200 5-2.300 6.500h-5.500c-1-2-2.500-4-3.500-6z" fill="#fafafa" stroke="#444" stroke-width="0.900"/>
  <path d="M394.800 599.500v5M396.900 598.500v6M398.900 599.500v5" stroke="#444" stroke-width="0.700"/>
  <!-- zoom -->
  <circle cx="420.500" cy="603.500" r="5.300" fill="#f6f6f6" stroke="#555" stroke-width="1.200"/>
  <path d="M424.300 607.500l5.500 5.800" stroke="#333" stroke-width="2.400"/>
  <path d="M426.500 598.500h4M428.500 596.500v4" stroke="#555" stroke-width="0.900"/>
  <!-- zoom window -->
  <rect x="441" y="597.500" width="14.500" height="14.500" fill="none" stroke="#777" stroke-width="0.800" stroke-dasharray="1.500 1.500"/>
  <circle cx="447.500" cy="603.500" r="5.300" fill="#f6f6f6" stroke="#555" stroke-width="1.200"/>
  <path d="M451.300 607.500l5.500 5.800" stroke="#333" stroke-width="2.400"/>
  <path d="M462 604h5.600l-2.800 3.600z" fill="#222"/>
  <!-- display -->
  <rect x="474" y="598" width="15.500" height="11" fill="#8fb2de" stroke="#5577a8" stroke-width="1"/>
  <rect x="475" y="599" width="13.500" height="4" fill="#b3cdee"/>
  <path d="M480.500 609.500h2.500v2.500h3v1.500h-8.500v-1.500h3z" fill="#666"/>
  <path d="M492.500 604h5.600l-2.800 3.600z" fill="#222"/>
  <!-- grid -->
  <defs><linearGradient id="gg" x1="0" y1="0" x2="0" y2="1"><stop offset="0" stop-color="#d4d4d4"/><stop offset="1" stop-color="#8c8c8c"/></linearGradient></defs><rect x="505.500" y="598" width="15.500" height="14.500" fill="url(#gg)" stroke="#777" stroke-width="0.800"/>
  <path d="M505.500 601h15.500M505.500 604h15.500M505.500 607h15.500M505.500 610h15.500M508.500 598v14.500M511.500 598v14.500M514.500 598v14.500M517.500 598v14.500" stroke="#777" stroke-width="0.500"/>
  <path d="M523 604h5.600l-2.800 3.600z" fill="#222"/>
  <!-- viewports -->
  <rect x="536.500" y="598.500" width="15.500" height="13.500" fill="#6c90c2" stroke="#5a7aaa" stroke-width="0.800"/>
  <rect x="538" y="600" width="5.700" height="4.700" fill="#a4c0e6"/><rect x="545" y="600" width="5.700" height="4.700" fill="#a4c0e6"/>
  <rect x="538" y="606" width="5.700" height="4.700" fill="#a4c0e6"/><rect x="545" y="606" width="5.700" height="4.700" fill="#a4c0e6"/>
  <path d="M555.500 604h5.600l-2.800 3.600z" fill="#222"/>
</svg>

<!-- ============ TIMELINE ============ -->
<div class="abs" id="timeline" style="left:0;top:624.500px;width:886px;height:40.500px;background:#f0f0f0;"></div>
<svg class="abs" style="left:0;top:625px" width="886" height="40" viewBox="0 625 886 40">
  <defs>
    <g id="tsk">
      <rect x="0.300" y="1.200" width="13.600" height="13.800" fill="#f8f8f8" stroke="#9db9d4" stroke-width="0.800"/>
      <path d="M3 4.300h8.500v4.300l-5.800 4.400h-2.700z" fill="none" stroke="#5a5a5a" stroke-width="0.900"/>
      <rect x="-0.600" y="0.300" width="1.800" height="1.800" fill="#4a8fc8"/><rect x="13" y="0.300" width="1.800" height="1.800" fill="#4a8fc8"/><rect x="-0.600" y="14.100" width="1.800" height="1.800" fill="#4a8fc8"/>
      <path d="M8 15.300l0.800-2.600l4.800-4.300l1.800 1.900l-4.800 4.300z" fill="#f2c265" stroke="#c9953a" stroke-width="0.300"/>
      <path d="M8 15.300l0.800-2.600l1.800 1.900z" fill="#5a4a3a"/>
      <path d="M13.600 8.400l1-0.900l1.800 1.900l-1 0.900z" fill="#e0453f"/>
      <path d="M8.800 20v5" stroke="#c2c2c2" stroke-width="1"/>
    </g>
    <g id="tbx">
      <path d="M0.600 3.700l2.500-3h9.400v12l-2.500 3h-9.400z" fill="#3f8fd6"/>
      <path d="M0.600 3.700l2.500-3h9.400l-2.500 3z" fill="#7bb8ec"/>
      <path d="M10 3.700l2.500-3v12l-2.500 3z" fill="#2a6fb4"/>
      <rect x="0.600" y="3.700" width="9.400" height="12" fill="#56a4e6"/>
      <rect x="0.600" y="13.700" width="9.400" height="2" fill="#8cc4f0" opacity="0.600"/>
      <path d="M14.100 2.500v10.300" stroke="#333" stroke-width="0.800"/>
      <circle cx="14.100" cy="2.300" r="0.900" fill="#222"/>
      <path d="M7.900 20v5" stroke="#c2c2c2" stroke-width="1"/>
    </g>
    <g id="tim">
      <rect x="0" y="0.700" width="15" height="15" fill="#4a9ee0"/>
      <path d="M0 15.700v-6.500c1.500-3.500 4.500-4.500 6.500-1.500c1 1.500 1.500 3 2.500 3c1.200 0 1.800-2.200 3.500-2.200c1.300 0 2 1.200 2.500 2.200v5z" fill="#2f7cbd"/>
      <path d="M0.800 9.500c1.500-3.300 4-4 5.800-1.200c1 1.500 1.400 2.800 2.400 2.800c1.200 0 1.800-2.200 3.500-2.200c1 0 1.600 0.800 2 1.500" fill="none" stroke="#cfe6f7" stroke-width="1"/>
      <circle cx="11.500" cy="4.200" r="1.600" fill="#e8f3fb"/>
      <path d="M7.700 20v5" stroke="#c2c2c2" stroke-width="1"/>
    </g>
  </defs>
  <!-- playback -->
  <g fill="#555">
    <rect x="10" y="643" width="2.200" height="12.500"/><path d="M21.700 643v12.500l-9-6.250z"/>
    <path d="M43.500 644v10.500l-9-5.250z"/><rect x="44.300" y="646.500" width="2.700" height="5.500"/>
    <path d="M61 642v14l11.700-7z"/>
    <rect x="84.800" y="646.500" width="2.700" height="5.500"/><path d="M88.300 644v10.500l9-5.250z"/>
    <path d="M111.500 643v12.500l9-6.250z"/><rect x="120.600" y="643" width="2.200" height="12.500"/>
  </g>
  <use href="#tsk" x="147" y="640"/>
  <use href="#tbx" x="171" y="640"/>
  <use href="#tim" x="195.500" y="640"/>
  <use href="#tsk" x="219.500" y="640"/>
  <use href="#tbx" x="244" y="640"/>
  <use href="#tsk" x="268" y="640"/>
  <use href="#tbx" x="292.500" y="640"/>
  <use href="#tsk" x="317" y="640"/>
  <use href="#tbx" x="341" y="640"/>
  <use href="#tsk" x="365.500" y="640"/>
  <!-- marker -->
  <path d="M380.200 635h11.800v2.500l-4.700 5.500h-2.400l-4.700-5.500z" fill="#505050"/>
  <rect x="384.800" y="641" width="2.300" height="24" fill="#505050"/>
  <!-- settings gear -->
  <g transform="translate(868.500,649)" fill="#666">
    <circle r="5"/>
    <rect x="-1.600" y="-7.200" width="3.200" height="14.400"/><rect x="-7.200" y="-1.600" width="14.400" height="3.200"/>
    <g transform="rotate(45)"><rect x="-1.600" y="-7.200" width="3.200" height="14.400"/><rect x="-7.200" y="-1.600" width="14.400" height="3.200"/></g>
    <circle r="2.300" fill="#f0f0f0"/>
  </g>
</svg>

</div>
</body>
</html>
